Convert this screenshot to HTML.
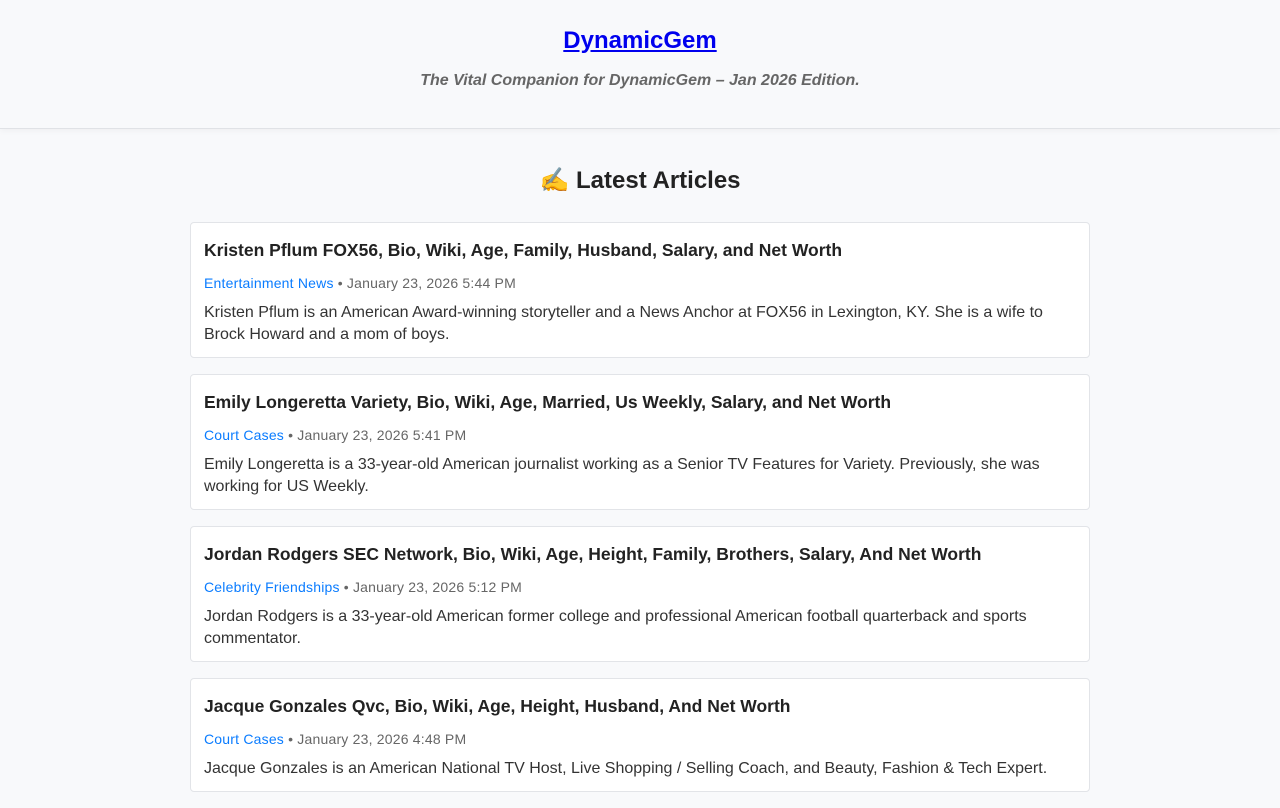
<!DOCTYPE html>
<html><head><meta charset="utf-8"><style>
body{margin:0;background:#f8f9fb;font-family:"Liberation Sans",Arial,sans-serif;color:#222;}
header{height:128px;border-bottom:1px solid #e0e2e6;text-align:center;box-shadow:0 2px 6px rgba(0,0,0,0.04);}
header a{display:inline-block;margin-top:27px;font-size:24px;font-weight:bold;color:#0000ee;text-decoration:underline;}
header p{margin:17px 0 0;font-style:italic;font-weight:bold;color:#666;font-size:16px;}
h2{text-align:center;font-size:24px;font-weight:bold;margin:37px 0 27px;color:#222;}
.card{width:872px;margin:0 auto 16px;background:#fff;border:1px solid #e2e4e8;border-radius:4px;padding:14px 13px 11px;}
.card h3{margin:1px 0 0;font-size:17.5px;font-weight:bold;line-height:24px;}
.meta{margin-top:11px;font-size:14px;color:#666;line-height:20px;letter-spacing:0.2px}
.meta a{color:#0a7cff;text-decoration:none}
.card p{margin:9px 0 0;font-size:16px;line-height:22px;color:#333;}
</style></head><body>
<header><a href="#">DynamicGem</a><p>The Vital Companion for DynamicGem – Jan 2026 Edition.</p></header>
<h2>✍️ Latest Articles</h2>
<div class="card"><h3>Kristen Pflum FOX56, Bio, Wiki, Age, Family, Husband, Salary, and Net Worth</h3><div class="meta"><a href="#">Entertainment News</a> • January 23, 2026 5:44 PM</div><p>Kristen Pflum is an American Award-winning storyteller and a News Anchor at FOX56 in Lexington, KY. She is a wife to Brock Howard and a mom of boys.</p></div>
<div class="card"><h3>Emily Longeretta Variety, Bio, Wiki, Age, Married, Us Weekly, Salary, and Net Worth</h3><div class="meta"><a href="#">Court Cases</a> • January 23, 2026 5:41 PM</div><p>Emily Longeretta is a 33-year-old American journalist working as a Senior TV Features for Variety. Previously, she was working for US Weekly.</p></div>
<div class="card"><h3>Jordan Rodgers SEC Network, Bio, Wiki, Age, Height, Family, Brothers, Salary, And Net Worth</h3><div class="meta"><a href="#">Celebrity Friendships</a> • January 23, 2026 5:12 PM</div><p>Jordan Rodgers is a 33-year-old American former college and professional American football quarterback and sports commentator.</p></div>
<div class="card"><h3>Jacque Gonzales Qvc, Bio, Wiki, Age, Height, Husband, And Net Worth</h3><div class="meta"><a href="#">Court Cases</a> • January 23, 2026 4:48 PM</div><p>Jacque Gonzales is an American National TV Host, Live Shopping / Selling Coach, and Beauty, Fashion &amp; Tech Expert.</p></div>
</body></html>
